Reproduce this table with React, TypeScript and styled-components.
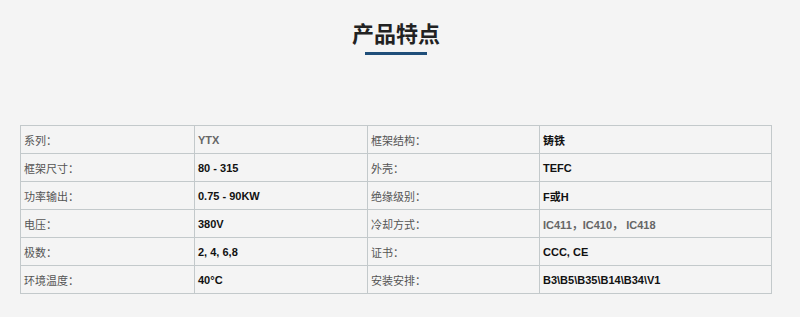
import styled, { createGlobalStyle } from "styled-components";

const GlobalStyle = createGlobalStyle`
  body {
    margin: 0;
    background: #f4f4f4;
    font-family: "Liberation Sans", "Noto Sans CJK SC", sans-serif;
  }
`;

type Row = [string, string, boolean, string, string, boolean];

// label, value, value dark?, label, value, value dark?
const rows: Row[] = [
  ["系列：", "YTX", false, "框架结构：", "铸铁", true],
  ["框架尺寸：", "80 - 315", true, "外壳：", "TEFC", true],
  ["功率输出：", "0.75 - 90KW", true, "绝缘级别：", "F或H", true],
  ["电压：", "380V", true, "冷却方式：", "IC411，IC410， IC418", false],
  ["极数：", "2, 4, 6,8", true, "证书：", "CCC, CE", true],
  ["环境温度：", "40°C", true, "安装安排：", "B3\\B5\\B35\\B14\\B34\\V1", true],
];

function App() {
  return (
    <>
      <GlobalStyle />
      <Page>
        <Heading>
          <Title>产品特点</Title>
          <Underline />
        </Heading>
        <SpecTable>
          <colgroup>
            <col style={{ width: 174 }} />
            <col style={{ width: 173 }} />
            <col style={{ width: 172 }} />
            <col />
          </colgroup>
          <tbody>
            {rows.map((r) => (
              <tr key={r[0]}>
                <Cell>{r[0]}</Cell>
                <Cell $value $dark={r[2]}>
                  {r[1]}
                </Cell>
                <Cell>{r[3]}</Cell>
                <Cell $value $dark={r[5]}>
                  {r[4]}
                </Cell>
              </tr>
            ))}
          </tbody>
        </SpecTable>
      </Page>
    </>
  );
}

const Page = styled.div`
  width: 792px;
  height: 317px;
  padding-top: 22px;
  box-sizing: border-box;
`;

const Heading = styled.div`
  display: flex;
  flex-direction: column;
  align-items: center;
  height: 103px;
`;

const Title = styled.h2`
  margin: 0;
  font-size: 22px;
  line-height: 26px;
  font-weight: bold;
  color: #222;
`;

const Underline = styled.div`
  width: 62px;
  height: 3px;
  margin-top: 4px;
  background: #1f4e79;
`;

const SpecTable = styled.table`
  margin-left: 20px;
  width: 752px;
  border-collapse: collapse;
  table-layout: fixed;
`;

const Cell = styled.td<{ $value?: boolean; $dark?: boolean }>`
  height: 28px;
  padding: 0 3px;
  border: 1px solid #c3c9cb;
  font-size: 11px;
  font-weight: ${({ $value }) => ($value ? "bold" : "normal")};
  color: ${({ $value, $dark }) => ($value ? ($dark ? "#111" : "#666") : "#555")};
  vertical-align: middle;
  box-sizing: border-box;
`;

export default App;
